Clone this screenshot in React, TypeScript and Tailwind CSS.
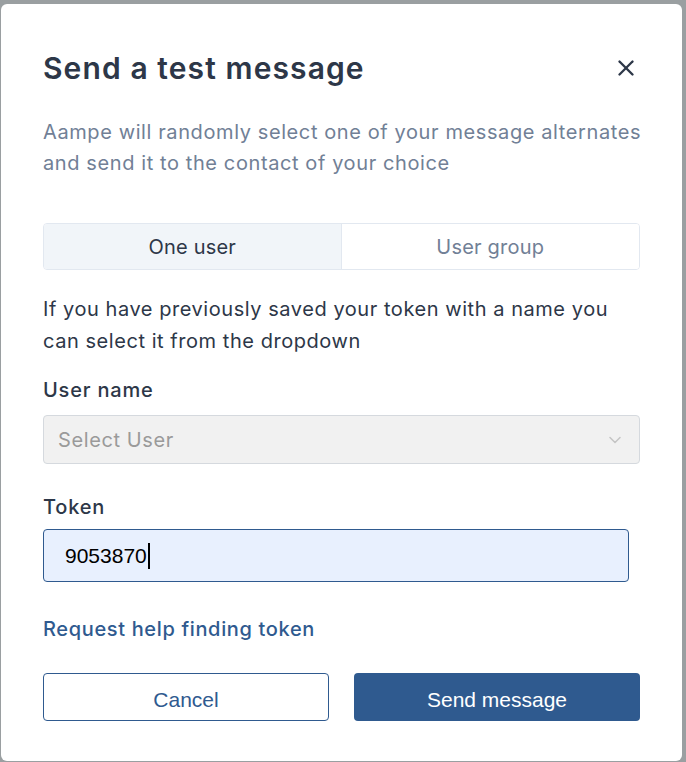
import { X, ChevronDown } from "lucide-react";

const SendTestMessageModal = () => {
  return (
    <div className="rounded-md bg-white px-[42px] pb-10 pt-[44px]">
      <div className="flex items-center justify-between">
        <h2 className="text-[30px] font-semibold leading-[40px] tracking-[1.1px] text-[#2d3748]">
          Send a test message
        </h2>
        <button className="mr-[1px] text-[#2d3748]">
          <X size={26} strokeWidth={2.2} />
        </button>
      </div>

      <p className="-mr-[10px] mt-[29px] text-[20px] leading-[31px] tracking-[0.6px] text-[#718096]">
        Aampe will randomly select one of your message alternates and send it to
        the contact of your choice
      </p>

      <div className="mt-[44px] grid h-[47px] grid-cols-2 overflow-hidden rounded-[4px] border border-[#e2e8f0] text-[20px] tracking-[0.2px]">
        <button className="border-r border-[#e2e8f0] bg-[#f1f5f9] text-[#2d3748]">
          One user
        </button>
        <button className="bg-white text-[#718096]">User group</button>
      </div>

      <p className="mt-[23px] text-[20px] leading-[32px] tracking-[0.55px] text-[#2d3748]">
        If you have previously saved your token with a name you can select it
        from the dropdown
      </p>

      <label className="mt-[17px] block text-[20px] font-medium leading-[32px] tracking-[0.8px] text-[#2d3748]">
        User name
      </label>
      <div className="mt-[9px] flex h-[49px] items-center justify-between rounded-[4px] border border-[#d5d9de] bg-[#f1f1f1] pl-[14px] pr-[16px]">
        <span className="text-[20px] tracking-[0.6px] text-[#9a9a9a]">Select User</span>
        <ChevronDown size={20} strokeWidth={1.8} className="mr-[-2px] text-[#c4c4c4]" />
      </div>

      <label className="mt-[27px] block text-[20px] font-medium leading-[32px] tracking-[0.8px] text-[#2d3748]">
        Token
      </label>
      <div className="mr-[11px] mt-[6px] flex h-[53px] items-center rounded-[4px] border border-[#2f5a8f] bg-[#e8f0fe] pl-[21px]">
        <span className="font-['Liberation_Sans',Arial,sans-serif] text-[21px] text-black">
          9053870
        </span>
        <span className="ml-[1px] h-[26px] w-[2px] bg-black" />
      </div>

      <a className="mt-[32px] block text-[20px] font-medium leading-[30px] tracking-[0.65px] text-[#2f5a8f]">
        Request help finding token
      </a>

      <div className="mt-[29px] grid grid-cols-2 gap-[25px] font-['Liberation_Sans',Arial,sans-serif] text-[21px]">
        <button className="h-[48px] rounded-[4px] border border-[#2f5a8f] bg-white pt-[5px] text-[#2f5a8f]">
          Cancel
        </button>
        <button className="h-[48px] rounded-[4px] bg-[#2f5a8f] pt-[5px] text-white">
          Send message
        </button>
      </div>
    </div>
  );
};

export default function App() {
  return (
    <div className="h-[762px] overflow-hidden bg-[#9a9fa1] pl-[1px] pr-[4px] pt-[4px] font-['Inter','Noto_Sans',sans-serif]">
      <SendTestMessageModal />
    </div>
  );
}
